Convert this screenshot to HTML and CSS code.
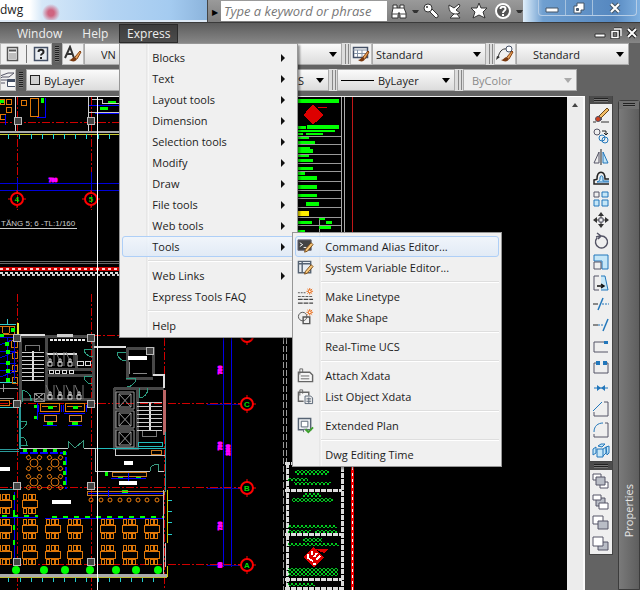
FILE: index.html
```html
<!DOCTYPE html>
<html lang="en">
<head>
    <meta charset="UTF-8">
    <meta name="viewport" content="width=device-width, initial-scale=1.0">
    <title>dwg</title>
    <link rel="stylesheet" href="styles.css">
</head>
<body>

    <!-- Title bar -->
    <header class="titlebar">
        <div class="glass"><span class="doc-name">dwg</span></div>
        <div class="infocenter">
            <button class="expand" aria-label="Show search">&#9654;</button>
            <input class="search" type="text" placeholder="Type a keyword or phrase" aria-label="Search">
            <button class="info-btn" aria-label="Find"><svg viewBox="0 0 18 18"><path d="M3 3h4v3h3V3h4v3l2 5v5h-6v-5H8v5H2v-5l1-5z" fill="#fff" stroke="#333"/><path d="M2 12h5M11 12h5M3 6h4M10 6h4" stroke="#444"/></svg></button>
            <span class="drop"></span>
            <button class="info-btn" aria-label="Subscription"><svg viewBox="0 0 18 18"><path d="M7 9l7 7 2-1v-2l-6-6" fill="#fff" stroke="#333"/><circle cx="6" cy="6" r="4" fill="#fff" stroke="#333"/><circle cx="5" cy="5" r="1" fill="#333"/></svg></button>
            <button class="info-btn" aria-label="Communication"><svg viewBox="0 0 18 18"><path d="M3 3c-1 7 4 11 11 8l-4-3 4-4-1-2-5 4zM8 12l-4 4h10l-3-4" fill="#fff" stroke="#333"/></svg></button>
            <button class="info-btn" aria-label="Favorites"><svg viewBox="0 0 18 18"><path d="M9 1l2 5h6l-4 4 2 6-6-3-6 3 2-6-4-4h6z" fill="#fff" stroke="#333"/></svg></button>
            <button class="info-btn" aria-label="Help"><svg viewBox="0 0 18 18"><circle cx="9" cy="9" r="7" fill="#555" stroke="#fff" stroke-width="2"/><path d="M6.500 7c0-3 5-3 5 0 0 2-2.500 1.500-2.500 4M9 12v2" fill="none" stroke="#fff" stroke-width="2"/></svg></button>
            <span class="drop"></span>
        </div>
        <div class="window-buttons">
            <div class="caption">
                <button aria-label="Minimize"><svg viewBox="0 0 14 14"><path d="M1 7h12v4H1z" fill="#fff" stroke="#456"/></svg></button>
                <button aria-label="Restore"><svg viewBox="0 0 14 14"><path d="M5 2h7v7H9v3H2V5h3z" fill="#fff" stroke="#456"/><path d="M4.500 7.500h2v2h-2z" fill="#568" stroke="#456"/></svg></button>
                <button class="close" aria-label="Close"><svg viewBox="0 0 14 14"><path d="M3 3l8 8M11 3l-8 8" stroke="#456" stroke-width="4"/><path d="M3 3l8 8M11 3l-8 8" stroke="#fff" stroke-width="2"/></svg></button>
            </div>
        </div>
    </header>

    <!-- Menu bar -->
    <nav class="menubar">
        <button class="menu-title">Window</button>
        <button class="menu-title">Help</button>
        <div class="menu-holder">
            <button class="menu-title open">Express</button>
            <ul class="menu">
                <li><button class="more">Blocks</button></li>
                <li><button class="more">Text</button></li>
                <li><button class="more">Layout tools</button></li>
                <li><button class="more">Dimension</button></li>
                <li><button class="more">Selection tools</button></li>
                <li><button class="more">Modify</button></li>
                <li><button class="more">Draw</button></li>
                <li><button class="more">File tools</button></li>
                <li><button class="more">Web tools</button></li>
                <li class="has-sub">
                    <button class="more active">Tools</button>
                    <ul class="menu submenu">
                        <li><button class="active"><svg viewBox="0 0 18 18"><path d="M1 2h14v11H1z" fill="#444" stroke="#667"/><path d="M3 5l3 2-3 2M7 10h3" stroke="#fff" fill="none"/><path d="M8 15l1-3 6-7 2 2-6 7z" fill="#f7c77a" stroke="#7a4b16"/></svg>Command Alias Editor...</button></li>
                        <li><button><svg viewBox="0 0 18 18"><path d="M1.500 2.500h13v12h-13zM1 5h14M5.500 3v11" fill="#e8edf2" stroke="#566373" stroke-width="1.500"/><path d="M8 16l1-3 6-7 2 2-6 7z" fill="#f7c77a" stroke="#7a4b16"/></svg>System Variable Editor...</button></li>
                        <li class="sep"></li>
                        <li><button><svg viewBox="0 0 18 18"><path d="M1 5h9" stroke="#555" stroke-dasharray="2 1"/><path d="M1 9h16" stroke="#555" stroke-dasharray="3 1"/><path d="M1 12h16M1 16h16" stroke="#444" stroke-width="1.500" stroke-dasharray="5 1"/><path d="M13.500 0v7M10 3.500h7M11 1l5 5M16 1l-5 5" stroke="#e76b18"/><circle cx="13.500" cy="3.500" r="1.500" fill="#fff" stroke="#e76b18"/></svg>Make Linetype</button></li>
                        <li><button><svg viewBox="0 0 18 18"><circle cx="6" cy="8" r="4.500" fill="#eee" stroke="#555"/><path d="M6.500 8.500h7v7h-7z" fill="none" stroke="#555" stroke-width="1.500"/><path d="M13.500 0v7M10 3.500h7M11 1l5 5M16 1l-5 5" stroke="#e76b18"/><circle cx="13.500" cy="3.500" r="1.500" fill="#fff" stroke="#e76b18"/></svg>Make Shape</button></li>
                        <li class="sep"></li>
                        <li><button>Real-Time UCS</button></li>
                        <li class="sep"></li>
                        <li><button><svg viewBox="0 0 18 18"><path d="M1.500 5.500h12l3 3v7h-15z" fill="#f6f6f6" stroke="#666" stroke-width="1.500"/><path d="M4 9.500h9M4 12.500h9M3 8V2h3v4" stroke="#666" fill="none"/></svg>Attach Xdata</button></li>
                        <li><button><svg viewBox="0 0 18 18"><path d="M7 14H1.500V4.500h11V8" fill="#f6f6f6" stroke="#666" stroke-width="1.500"/><path d="M3 8V2h3v4" stroke="#666" fill="none"/><path d="M8.500 8.500h6l2 2v6h-8z" fill="#eee" stroke="#566373"/><path d="M10 11.500h5M10 14h5M12.500 10v6" stroke="#566373"/></svg>List Object Xdata</button></li>
                        <li class="sep"></li>
                        <li><button><svg viewBox="0 0 18 18"><path d="M1.500 1.500h13v12h-13z" fill="#eef0f3" stroke="#566373" stroke-width="1.500"/><path d="M4.500 4.500h7v6h-7zM7 16v-3h4" fill="#fff" stroke="#566373"/><path d="M9 13l3 3 5-5" fill="none" stroke="#3da02c" stroke-width="2"/></svg>Extended Plan</button></li>
                        <li class="sep"></li>
                        <li><button>Dwg Editing Time</button></li>
                    </ul>
                </li>
                <li class="sep"></li>
                <li><button class="more">Web Links</button></li>
                <li><button>Express Tools FAQ</button></li>
                <li class="sep"></li>
                <li><button>Help</button></li>
            </ul>
        </div>
        <div class="doc-buttons">
            <button aria-label="Minimize drawing"><svg viewBox="0 0 12 12"><path d="M1 7h10v3H1z" fill="#fff" stroke="#333"/></svg></button>
            <button aria-label="Restore drawing"><svg viewBox="0 0 12 12"><path d="M4 2h7v7M2 4.500h6v6H2z" fill="none" stroke="#222" stroke-width="3"/><path d="M4 2h7v7M2 4.500h6v6H2z" fill="none" stroke="#fff" stroke-width="1.500"/></svg></button>
            <button aria-label="Close drawing"><svg viewBox="0 0 12 12"><path d="M2 2l8 8M10 2l-8 8" stroke="#222" stroke-width="4"/><path d="M2 2l8 8M10 2l-8 8" stroke="#fff" stroke-width="2"/></svg></button>
        </div>
    </nav>

    <!-- Toolbars -->
    <section class="toolbars">
        <div class="toolbar">
            <div class="tools first">
                <button aria-label="Calculator"><svg viewBox="0 0 18 18"><path d="M4.500 2.500h10v13h-10z" fill="#f4f4f4" stroke="#555" stroke-width="1.500"/><path d="M6 5.500h7" stroke="#555" stroke-width="2"/><path d="M6 9h7M6 11h7M6 13h7" stroke="#888"/></svg></button>
                <span class="line"></span>
                <button aria-label="Help topics"><svg viewBox="0 0 18 18"><path d="M2.500 2.500h13v13h-13z" fill="#e8ecf1" stroke="#445066" stroke-width="1.500"/><path d="M6.500 7c0-3 5-3 5 0 0 2-2.500 1.500-2.500 3.500M9 12v2" fill="none" stroke="#222" stroke-width="2"/></svg></button>
            </div>
            <span class="grip dark"></span>
            <div class="tools"><button aria-label="Text style"><svg viewBox="0 0 18 18"><path d="M1 13L6 2l4 11M3 9h6" fill="none" stroke="#333" stroke-width="2"/><path d="M11 12l5-6 1 1-4 7" fill="#e9a35a" stroke="#85400f"/><path d="M5 15c3 0 3-3 6-3l2 2c-1 3-5 3-8 1z" fill="#7a3a10"/></svg></button></div>
            <label class="combo text-style"><select aria-label="Text style"><option>VN</option></select></label>
            <span class="grip"></span>
            <div class="tools"><button aria-label="Table style"><svg viewBox="0 0 18 18"><path d="M1.500 2.500h14v10h-14z" fill="#fff" stroke="#445066" stroke-width="1.500"/><path d="M1 5h14M5.500 5v7M10 5v7M2 8.500h13" stroke="#8492a5"/><path d="M11 12l5-6 1 1-4 7" fill="#e9a35a" stroke="#85400f"/><path d="M6 15c3 0 3-3 5-3l2 2c-1 3-5 3-7 1z" fill="#7a3a10"/></svg></button></div>
            <label class="combo table-style"><select aria-label="Table style"><option>Standard</option></select></label>
            <span class="grip"></span>
            <div class="tools"><button aria-label="Leader style"><svg viewBox="0 0 18 18"><path d="M2 13C3 7 6 3 11 4" fill="none" stroke="#333"/><path d="M0 15l1-4 3 1z" fill="#333"/><circle cx="13" cy="4" r="3" fill="#fff" stroke="#445066"/><path d="M11 12l5-6 1 1-4 7" fill="#e9a35a" stroke="#85400f"/><path d="M5 15c3 0 3-3 6-3l2 2c-1 3-5 3-8 1z" fill="#7a3a10"/></svg></button></div>
            <label class="combo leader-style"><select aria-label="Leader style"><option>Standard</option></select></label>
        </div>
        <div class="toolbar">
            <div class="tools layer"><button aria-label="Layer states"><svg viewBox="0 0 18 18"><path d="M1 5l8-3h6l-5 4H3l-3 3h9M1 12h5" fill="none" stroke="#556"/><path d="M8.500 8.500h8v7h-8z" fill="#fff" stroke="#445066"/><path d="M9 10h7" stroke="#445066" stroke-width="2"/></svg></button></div>
            <span class="grip dark"></span>
            <label class="combo color"><i class="swatch"></i><select aria-label="Color"><option>ByLayer</option></select></label>
            <label class="combo linetype"><select aria-label="Linetype"><option>S</option></select></label>
            <span class="grip"></span>
            <label class="combo lineweight"><i class="stroke"></i><select aria-label="Lineweight"><option>ByLayer</option></select></label>
            <span class="grip"></span>
            <label class="combo plot"><select aria-label="Plot style" disabled><option>ByColor</option></select></label>
        </div>
    </section>

    <main class="workspace">
        <!-- Drawing area -->
        <div class="drawing">
            <svg viewBox="0 97 567 493" preserveAspectRatio="xMinYMin slice" fill="none" shape-rendering="crispEdges">
                <defs>
                    <g id="table" stroke="#e07808">
                        <path d="M0 6.500h15v7H0zM1.500 0.500h3v5h-3zM6 0.500h3v5H6zM10.500 0.500h3v5h-3zM1.500 14.500h3v5h-3zM6 14.500h3v5H6zM10.500 14.500h3v5h-3z"/>
                    </g>
                    <g id="round" stroke="#d87410" shape-rendering="auto">
                        <circle r="4"/>
                        <path d="M-8-6l3-2 2 3-3 2zM8-6l-3-2-2 3 3 2zM-8 6l3 2 2-3-3-2zM8 6L5 8 3 5l3-2z"/>
                    </g>
                    <g id="bubble" stroke="#f00" shape-rendering="auto"><circle r="6" stroke-width="2"/><path d="M-9 0h3M6 0h3M0-9v3M0 6v3"/></g>
                    <path id="column" d="M0 0h7v7H0z" fill="#444" stroke="#bbb"/>
                    <g id="wc" stroke="#ddd" shape-rendering="auto"><path d="M-2 1h4v4h-4zM-1-2h2v3h-2z"/><path d="M-4-9l3 7M4-9v14" stroke="#777"/></g>
                    <g id="lift" stroke="#999" shape-rendering="auto"><path d="M0 0h18v17H0zM3 2h12v13H3zM3 2l12 13M15 2L3 15"/></g>
                    <g id="desk"><path d="M0 0h19v8H0zM2 3h15" stroke="#e07808"/><path d="M-2 9V2M21 2v7M-1 10h21" stroke="#00f"/><path d="M8 3h5v3H8zM7 19h6v3H7z" fill="#0f0"/><path d="M4 12h12v6H4z" stroke="#d98636"/><path d="M3 22h14" stroke="#00f"/></g>
                    <pattern id="script" width="4" height="4" patternUnits="userSpaceOnUse"><path d="M0 0l4 4M4 0L0 4" stroke="#00c81e" shape-rendering="auto"/></pattern>
                </defs>

                <!-- grid axes -->
                <g stroke="#d00000" stroke-dasharray="8 2 2 2">
                    <path d="M17 97v113M91 97v113M17 294v296M91 294v296M164 338v252M0 122h119M93 335h154M0 403h241M0 487h241M0 564h241"/>
                </g>

                <!-- upper plan -->
                <g stroke="#e07808"><path d="M0 99h4v5H0zM6 99h5v5H6zM6 107h5v5H6zM0 114h5v5H0zM30 98h8v18h-8z"/><circle cx="24" cy="103" r="3"/></g>
                <path d="M45 98v19h-8M5 115v10M89 105h30M95 113h24" stroke="#00f"/>
                <path d="M41 98h3v5h-3zM0 100h4v3H0zM100 107h8v3h-8zM108 101h8v2h-8z" fill="#0f0"/>
                <path d="M15 97v34M88 97v34M92 99h10v4h17M88 112h31" stroke="#ccc"/>
                <use href="#column" x="14" y="117"/><use href="#column" x="87" y="117"/>
                <path d="M0 132h119" stroke="#aaa" stroke-width="2"/><path d="M0 134h119" stroke="#cc3"/>
                <path d="M8 134v5M19 134v5M31 134v5M42 134v5M53 134v5M64 134v5M75 134v5M86 134v5M98 134v5M109 134v5" stroke="#2dd"/>
                <path d="M0 183h119M0 190h119M17 178v12M91 172v18" stroke="#0000d8"/>
                <use href="#bubble" x="17" y="199"/><use href="#bubble" x="91" y="199"/>
                <path d="M0 228h77" stroke="#ccc"/>
                <path d="M0 261h119M0 263h119" stroke="#666"/>
                <path d="M0 269h119" stroke="#c00" stroke-width="4"/><path d="M0 269h119" stroke="#fcc" stroke-width="2" stroke-dasharray="3 3"/>
                <path d="M0 273h119" stroke="#ddd" stroke-width="2" stroke-dasharray="3 2"/><path d="M2 275h117" stroke="#ccc" stroke-width="2" stroke-dasharray="3 2"/>

                <!-- left rooms -->
                <path d="M0 324h16M7 319v5M0 382h16M0 407h14" stroke="#3cc"/><path d="M18 323v12" stroke="#ee3" stroke-width="2"/>
                <g stroke="#d87410"><circle cx="6" cy="330" r="4"/><path d="M0 326h14v8H0M11 340h6v7h-6zM12 352h5v6h-5zM12 365h5v6h-5zM12 377h5v6h-5zM0 400h9v5H0"/></g>
                <path d="M0 337h18M0 345l12-5M0 351h16M0 358l14-6M0 363h16M0 370h16M0 377l14-5M14 338v42M7 337v44" stroke="#00d"/>
                <path d="M11 328h4v4h-4zM0 334h4v3H0zM5 342h4v4H5zM6 350h4v4H6zM6 361h4v4H6zM6 369h4v4H6zM6 378h4v4H6z" fill="#0f0"/>
                <path d="M0 388h18M0 398h14M3 384v8" stroke="#999"/>

                <!-- core walls -->
                <g stroke="#484848" stroke-width="3"><path d="M20 337v67M46 336v64M46 369h47M46 375h47M21 336h72M93 338v64M22 399h71M76 355v14M127 348h26v28M127 348v30h26M114 388h50M114 388v60h23V388"/></g>
                <path d="M20 335h25M94 347h32M153 375h11v13M47 354h30" stroke="#ddd" stroke-width="2"/>
                <path d="M50 340h35" stroke="#eee" stroke-width="2" stroke-dasharray="3 1"/><path d="M57 334h16v3H57z" fill="#ccc"/>
                <path d="M22 352h22M22 356h22M22 360h22M22 364h22M22 368h22M22 372h22M22 376h22M22 380h22" stroke="#ccc"/>
                <path d="M33 351v30M150 402v29" stroke="#ddd" stroke-width="2"/><path d="M25 351v-6h14v6M142 431v5h14v-5" stroke="#777"/>
                <path d="M137 402h25M137 406h25M137 410h25M137 414h25M137 418h25M137 422h25M137 426h25M137 430h25" stroke="#ccc"/>
                <path d="M164 390v45" stroke="#b66" stroke-width="3"/>
                <use href="#wc" x="50" y="361"/><use href="#wc" x="60" y="361"/><use href="#wc" x="70" y="361"/>
                <use href="#wc" x="50" y="394"/><use href="#wc" x="60" y="394"/><use href="#wc" x="70" y="394"/><use href="#wc" x="79" y="394"/>
                <path d="M77 361h6v4h-6zM85 361h5v4h-5zM49 370h4v3h-4zM55 370h4v3h-4zM62 370h4v3h-4zM69 370h4v3h-4z" stroke="#ddd"/>
                <path d="M34 393h10v8H34zM34 393l10 8M44 393l-10 8M129 362v12M133 373h14" stroke="#888"/>
                <use href="#column" x="13" y="334"/><use href="#column" x="87" y="334"/><use href="#column" x="13" y="400"/><use href="#column" x="87" y="400"/><use href="#column" x="146" y="347"/>
                <path d="M22 402v-12c6 1 10 6 9 11M92 349h-8c0 4 4 8 9 8M92 376h-8c0 4 3 8 8 8M126 352h-9c0 5 4 9 9 9M126 378h10c0 5-5 9-9 9M139 388v10c5 0 9-4 9-10M20 421h7c0 4-4 8-7 8M20 445h7c0-5-3-8-7-8" stroke="#2c9c80"/>
                <path d="M19 407v42M20 407v42M0 489h13M165 432v60M0 449h19M0 451h19" stroke="#2a9a9a"/>
                <use href="#lift" x="116" y="392"/><use href="#lift" x="116" y="411"/><use href="#lift" x="116" y="430"/>
                <use href="#desk" x="40" y="403"/><use href="#desk" x="65" y="403"/>
                <path d="M34 405h3v3h-3zM34 416h3v3h-3z" fill="#0f0"/><path d="M37 403v17" stroke="#00f"/>

                <!-- dining hall -->
                <path d="M20 448h48M84 448h11v23h55M115 448v7h50M158 471h6" stroke="#ccc"/><path d="M96 448h69M138 442h24v4h-24z" stroke="#2bb"/>
                <path d="M68 448v-7l7 7 8-7v7M150 471c0-5 4-7 8-7v7" stroke="#3a9a80"/>
                <path d="M20 453h46v36" stroke="#00f" stroke-width="2" stroke-dasharray="8 2"/>
                <path d="M23 449h4v3h-4zM33 449h4v3h-4zM43 449h4v3h-4zM53 449h4v3h-4zM63 451h3v4h-3zM63 461h3v4h-3zM63 471h3v4h-3zM63 481h3v4h-3zM105 472h3v4h-3zM118 476h5v3h-5zM136 476h5v3h-5zM122 490h6v4h-6z" fill="#0f0"/>
                <use href="#round" x="34" y="463"/><use href="#round" x="55" y="463"/><use href="#round" x="34" y="482"/><use href="#round" x="55" y="482"/>
                <path d="M112 472h34v4h-34zM87 491h77v4M87 491v4h77M151 450h10v4h-10z" stroke="#c87820"/><path d="M111 478h35M88 493h75M108 490v7M128 473v8" stroke="#00f"/>
                <g stroke="#f08010" shape-rendering="auto"><circle cx="91" cy="500" r="2"/><circle cx="101" cy="500" r="2"/><circle cx="110" cy="500" r="2"/><circle cx="120" cy="500" r="2"/><circle cx="129" cy="500" r="2"/><circle cx="138" cy="500" r="2"/><circle cx="147" cy="500" r="2"/><circle cx="157" cy="500" r="2"/></g>
                <path d="M0 467h10v4H0zM52 500h19v4H52zM124 461h9v4h-9zM119 481h18v4h-18zM128 356h19v4h-19z" fill="#fff"/>
                <path d="M45 518h118M0 517h38M14 492v66" stroke="#00f"/>
                <path d="M2 516h36" stroke="#0f0" stroke-width="2" stroke-dasharray="5 6"/><path d="M52 517h112" stroke="#0f0" stroke-width="2" stroke-dasharray="5 6"/><path d="M14 495v60" stroke="#0f0" stroke-width="2" stroke-dasharray="5 10"/>
                <use href="#table" x="-4" y="494"/><use href="#table" x="22" y="494"/>
                <use href="#table" x="-4" y="519"/><use href="#table" x="22" y="519"/><use href="#table" x="45" y="519"/><use href="#table" x="67" y="519"/><use href="#table" x="100" y="519"/><use href="#table" x="122" y="519"/><use href="#table" x="144" y="519"/>
                <use href="#table" x="-4" y="545"/><use href="#table" x="22" y="545"/><use href="#table" x="45" y="545"/><use href="#table" x="67" y="545"/><use href="#table" x="100" y="545"/><use href="#table" x="122" y="545"/><use href="#table" x="144" y="545"/>
                <use href="#column" x="13" y="482"/><use href="#column" x="87" y="482"/><use href="#column" x="13" y="558"/><use href="#column" x="87" y="558"/>
                <path d="M167 490v53M167 566v11" stroke="#cc0"/><path d="M163 490v86M165 543v24" stroke="#bbb"/>
                <path d="M168 500h4M168 511h4M168 522h4M168 534h4M8 577v5M20 577v5M31 577v5M42 577v5M53 577v5M64 577v5M75 577v5M86 577v5M98 577v5M109 577v5M120 577v5M131 577v5M142 577v5M153 577v5" stroke="#2cc"/>
                <path d="M0 575h167" stroke="#aaa" stroke-width="3"/><path d="M0 577h167" stroke="#bb3"/>
                <g fill="#0f0" shape-rendering="auto"><circle cx="16" cy="570" r="4"/><circle cx="44" cy="570" r="4"/><circle cx="65" cy="570" r="4"/><circle cx="90" cy="570" r="4"/><circle cx="116" cy="570" r="4"/><circle cx="136" cy="570" r="4"/><circle cx="158" cy="570" r="4"/></g>
                <path d="M97 97v493" stroke="#fff"/>

                <!-- dimension lines -->
                <path d="M223 338v229M231 338v229" stroke="#0000e8"/><path d="M207 404h33M207 488h33M207 565h33" stroke="#00a"/>
                <use href="#bubble" x="247" y="336"/><use href="#bubble" x="247" y="404"/><use href="#bubble" x="247" y="488"/><use href="#bubble" x="247" y="565"/>

                <!-- sheet frame and title block -->
                <path d="M283 338v252M286 338v252" stroke="#999" stroke-dasharray="6 2"/>
                <path d="M341 97v137M344 97v137" stroke="#aaa"/><path d="M352 97v137" stroke="#c01818"/>
                <path d="M297 136h44M297 144h44M297 154h44M297 163h44M297 171h44M297 181h44M297 190h44M297 198h44M297 207h44M297 217h44M319 217v17M297 225h44" stroke="#999"/>
                <path d="M297 99h42v4h-42zM297 126h9v3h-9zM307 125h32v4h-32zM297 130h38v2h-38zM297 133h6v2h-6zM306 133h17v2h-17zM297 137h12v2h-12zM297 141h18v3h-18zM297 147h13v2h-13zM297 149h16v4h-16zM297 155h12v2h-12zM297 159h16v3h-16zM297 167h16v3h-16zM297 172h8v3h-8zM297 176h20v4h-20zM297 185h20v4h-20zM297 194h20v3h-20zM306 202h13v4h-13zM297 221h15v3h-15zM297 230h8v3h-8zM319 218h6v2h-6zM326 221h6v3h-6zM319 226h12v3h-12z" fill="#0f0"/>
                <path d="M297 211h12v5h-12z" fill="#fe0"/>
                <path d="M313 105l10 10-10 9-9-9zM318 107h9" fill="#d00" stroke="#d00"/>
                <path d="M287 463v127M342 467v123M285 463h57M285 490h57M285 534h57M285 579h57M285 588h57" stroke="#ddd" stroke-width="3" stroke-dasharray="5 1"/>
                <path d="M295 470h34v5h-34zM288 478h20v3h-20zM294 482h37v3h-37zM303 493h18v4h-18zM292 498h41v4h-41zM288 525h49v3h-49zM288 530h23v3h-23zM315 530h22v3h-22zM303 538h19v4h-19zM288 543h51v3h-51zM288 568h50v8h-50zM288 583h27v3h-27z" fill="url(#script)"/>
                <path d="M313 547l11 10-10 10-11-10zM314 549h14l-4 4" fill="#d00"/><path d="M308 554v5M312 551v4M317 553l-3 4M320 556l-4 4M309 559l4 2M313 564h3" stroke="#fff" stroke-width="2"/>
                <path d="M352 467v123" stroke="#e00" stroke-width="3"/><path d="M352 467v123" stroke="#fff" stroke-dasharray="3 3"/>

                <!-- labels -->
                <g class="axis-label"><text x="17" y="202">4</text><text x="91" y="202">5</text><text x="247" y="407">C</text><text x="247" y="491">B</text><text x="247" y="568">A</text></g>
                <text class="plan-title" x="1" y="226">TĂNG 5; 6 -TL:1/160</text>
                <g class="dim-label"><text x="53" y="182">780</text><text transform="translate(222 370) rotate(-90)">780</text><text transform="translate(222 446) rotate(-90)">780</text><text transform="translate(230 450) rotate(-90)">2300</text><text transform="translate(222 526) rotate(-90)">720</text><text transform="translate(222 565) rotate(-90)">80</text></g>
            </svg>
        </div>
        <div class="scrollbar"><button aria-label="Scroll up"></button></div>

        <div class="dock">
            <!-- Modify toolbar -->
            <div class="palette">
                <span class="handle"></span>
                <button aria-label="Erase"><svg viewBox="0 0 16 16"><path d="M6 9l8-8 2 2-8 8z" fill="#f3bc63" stroke="#6b4a1c"/><path d="M5 9l4 3-2 2-4-2z" fill="#333"/><circle cx="5" cy="12" r="2.500" fill="#d2401c"/><path d="M0 15h3M8 15h8" stroke="#333"/></svg></button>
                <button aria-label="Copy"><svg viewBox="0 0 16 16"><circle cx="4" cy="4" r="3"/><path d="M9 3h4v4M11 5l2 2 2-2" stroke="#222"/><circle class="b" cx="9" cy="10" r="3"/><circle class="b" cx="12" cy="12" r="3"/></svg></button>
                <button aria-label="Mirror"><svg viewBox="0 0 16 16"><path d="M6 3v11H1z"/><path class="b f" d="M10 3v11h5z"/><path d="M8 0v16" stroke="#222"/></svg></button>
                <button aria-label="Offset"><svg viewBox="0 0 16 16"><path d="M16 14H1v-4c2-1 3 0 3-1 0-9 8-9 8 0h4" stroke="#222" stroke-width="1.500"/><path class="b f" d="M16 12H4c2-1 3-1 3-4 0-3 3-3 3 0v3h6"/></svg></button>
                <button aria-label="Array"><svg viewBox="0 0 16 16"><path d="M1 1h5v5H1z"/><path class="b f" d="M9 1h6v5H9zM1 9h5v6H1zM9 9h6v6H9z"/></svg></button>
                <button aria-label="Move"><svg viewBox="0 0 16 16"><path d="M6 6h4v4H6z"/><path d="M8 0l3 4H5zM8 16l3-4H5zM0 8l4-3v6zM16 8l-4-3v6z" fill="#333" stroke="none"/><path d="M8 3v3M8 10v3M3 8h3M10 8h3" stroke="#333"/></svg></button>
                <button aria-label="Rotate"><svg viewBox="0 0 16 16"><path d="M8 3a6 6 0 1 1-4 2M3 4l4-1M4 0l4 3-3 3" stroke-width="1.500"/></svg></button>
                <button aria-label="Scale"><svg viewBox="0 0 16 16"><path class="b f" d="M1 1h14v14H9V7H1z"/><path d="M1 8h7v7H1z"/></svg></button>
                <button aria-label="Stretch"><svg viewBox="0 0 16 16"><path class="b f" d="M8 1h4l3 14H8"/><path d="M6 1H1v14h5"/><path d="M4 11h6M8 9l3 2-3 2" stroke="#111" stroke-width="1.500"/></svg></button>
                <button aria-label="Trim"><svg viewBox="0 0 16 16"><path d="M0 8h5" stroke="#222"/><path class="b" d="M5 14l5-12" stroke-width="1.500"/><path class="b" d="M9 8h7" stroke-dasharray="2 1"/></svg></button>
                <button aria-label="Extend"><svg viewBox="0 0 16 16"><path d="M0 8h5" stroke="#222"/><path class="b" d="M5 8h6" stroke-dasharray="2 1"/><path class="b" d="M10 14l5-12" stroke-width="1.500"/></svg></button>
                <button aria-label="Break at point"><svg viewBox="0 0 16 16"><path d="M12 4H1v10h14"/><path d="M11 3h4v3h-4z" fill="#27b" stroke="none"/></svg></button>
                <button aria-label="Break"><svg viewBox="0 0 16 16"><path d="M4 4H1v10h14V4h-3"/><path d="M3 2h4v4H3zM10 2h4v4h-4z" fill="#27b" stroke="none"/></svg></button>
                <button aria-label="Join"><svg viewBox="0 0 16 16"><path class="b" d="M1 8h14"/><path d="M4 5l4 3-4 3zM12 5L8 8l4 3z" fill="#27b" stroke="none"/></svg></button>
                <button aria-label="Chamfer"><svg viewBox="0 0 16 16"><path d="M1 11v4h14V1h-4"/><path class="b" d="M0 10l9-9"/></svg></button>
                <button aria-label="Fillet"><svg viewBox="0 0 16 16"><path d="M1 12v3h14V1h-3"/><path class="b" d="M1 10c0-6 4-9 9-9"/></svg></button>
                <button aria-label="Explode"><svg viewBox="0 0 16 16"><path class="b f" d="M4 6h6v8H4zM10 6l3-2v6l-3 3M0 6l3-2v6l-3 2zM5 3l3-2h4L9 4zM13 4l3-1v7l-2 2z"/></svg></button>
            </div>
            <!-- Draw order toolbar -->
            <div class="palette">
                <span class="handle"></span>
                <button aria-label="Bring to front"><svg viewBox="0 0 16 16"><path class="w" d="M0 1h8v6H0zM7 9h8v6H7z"/><path class="g" d="M3 4h9v8H3z"/></svg></button>
                <button aria-label="Send to back"><svg viewBox="0 0 16 16"><path class="g" d="M3 4h9v8H3z"/><path class="w" d="M0 1h8v5H0zM6 9h9v6H6z"/></svg></button>
                <button aria-label="Bring above objects"><svg viewBox="0 0 16 16"><path class="w" d="M0 1h10v8H0z"/><path class="g" d="M5 6h10v8H5z"/></svg></button>
                <button aria-label="Send under objects"><svg viewBox="0 0 16 16"><path class="g" d="M5 6h10v8H5z"/><path class="w" d="M0 1h10v9H0z"/></svg></button>
            </div>
        </div>

        <aside class="properties">
            <span class="handle"></span>
            <span class="properties-title">Properties</span>
        </aside>
    </main>

</body>
</html>
```
FILE: styles.css
```css
* {
    box-sizing: border-box;
}

body {
    margin: 0;
    height: 100vh;
    display: flex;
    flex-direction: column;
    overflow: hidden;
    background-color: #636363;
    font-family: "Open Sans", "Noto Sans", sans-serif;
    font-size: 11px;
    color: #1c1c1c;
}

button, select, input {
    font: inherit;
    color: inherit;
    margin: 0;
    padding: 0;
    border: none;
    background: none;
}

svg {
    display: block;
}

/* Title bar */
.titlebar {
    display: flex;
    height: 22px;
    flex-shrink: 0;
}

.glass {
    width: 207px;
    background: radial-gradient(circle at 51px 13px, #cf6480 3px, rgba(208, 96, 124, 0) 9px),
        linear-gradient(90deg, #fff 30px, #d6e8f8 42px, #b4d4f3 110px, #a4cbf0 170px, #8cb4dc);
    border-bottom: 2px solid #dde9f5;
}

.doc-name {
    display: block;
    line-height: 20px;
    font-size: 12px;
}

.infocenter {
    flex: 1;
    display: flex;
    align-items: center;
    background: linear-gradient(#9a9a9a, #7e7e7e);
}

.expand {
    width: 14px;
    height: 22px;
    font-size: 8px;
    color: #000;
    border-left: 1px solid #444;
}

.search {
    flex: 1;
    min-width: 0;
    height: 20px;
    padding-left: 3px;
    background: #fff;
    font-size: 13px;
    font-style: italic;
}

.search::placeholder {
    color: #777;
}

.info-btn {
    width: 24px;
    padding-left: 3px;
}

.info-btn svg {
    width: 18px;
    height: 18px;
}

.drop {
    width: 7px;
    border: 2px solid transparent;
    border-top: 3px solid #333;
    margin: 3px 0 0 1px;
}

.window-buttons {
    width: 117px;
    padding-left: 15px;
    background: linear-gradient(90deg, #e0effb, #6f9fd0 20px, #5688c0 90px, #7fb0e0);
}

.caption {
    display: flex;
    width: 99px;
    height: 16px;
    border: 1px solid #b6cde6;
    border-top: none;
    border-radius: 0 0 4px 4px;
}

.caption button {
    width: 27px;
    display: flex;
    justify-content: center;
    align-items: center;
    border-right: 1px solid #a6c2de;
}

.caption .close {
    flex: 1;
    border-right: none;
}

.caption svg {
    width: 14px;
    height: 14px;
}

/* Menu bar */
.menubar {
    display: flex;
    align-items: flex-end;
    height: 21px;
    flex-shrink: 0;
    padding-left: 7px;
    background: linear-gradient(#5c5c5c, #868686);
    border-top: 1px solid #3a3a3a;
}

.menu-title {
    height: 19px;
    padding: 0 10px;
    font-size: 12px;
    color: #eee;
}

.menu-holder {
    position: relative;
    margin-left: 1px;
}

.menu-title.open {
    width: 59px;
    background: linear-gradient(#3c3c3c, #4c4c4c);
    border: 1px solid #2a2a2a;
    padding: 0;
}

.doc-buttons {
    display: flex;
    margin-left: auto;
    gap: 4px;
    padding: 0 2px 4px 0;
}

.doc-buttons svg {
    width: 12px;
    height: 12px;
}

/* Menus */
.menu {
    position: absolute;
    z-index: 2;
    left: 0;
    top: 19px;
    width: 179px;
    margin: 0;
    padding: 3px 2px 1px;
    list-style: none;
    background: linear-gradient(90deg, #f0f0f0 26px, #dcdcdc 27px, #fff 28px, #f0f0f0 29px);
    border: 1px solid #979797;
    box-shadow: 2px 2px 2px rgba(0, 0, 0, 0.4);
}

.menu button {
    position: relative;
    display: block;
    width: 100%;
    height: 21px;
    padding-left: 29px;
    border: 1px solid transparent;
    border-radius: 3px;
    text-align: left;
    white-space: nowrap;
}

.menu button.active {
    border-color: #aecff7;
    background: linear-gradient(rgba(240, 246, 253, 0.8), rgba(222, 233, 247, 0.8));
}

.more::after {
    content: "";
    position: absolute;
    right: 9px;
    top: 6px;
    border: 4px solid transparent;
    border-left: 4px solid #111;
    border-right: none;
}

.menu svg {
    position: absolute;
    left: 1px;
    top: 1px;
    width: 17px;
    height: 17px;
}

.sep {
    height: 8px;
    margin-left: 26px;
    background: linear-gradient(transparent 3px, #dedede 3px, #dedede 4px, #fff 4px, #fff 5px, transparent 5px);
}

.has-sub {
    position: relative;
}

.submenu {
    left: 170px;
    top: -4px;
    width: 210px;
}

/* Toolbars */
.toolbars {
    display: flex;
    flex-direction: column;
    gap: 4px;
    padding-bottom: 5px;
}

.toolbar {
    display: flex;
    height: 22px;
}

.tools {
    display: flex;
    align-items: center;
    justify-content: center;
    width: 22px;
    background: #f0f0f0;
    border: 1px solid #bbb;
}

.tools svg {
    width: 18px;
    height: 18px;
}

.tools.first {
    width: 52px;
    gap: 5px;
}

.tools.layer {
    width: 16px;
    overflow: hidden;
}

.line {
    width: 1px;
    height: 18px;
    background: #777;
}

.grip {
    width: 8px;
    background: repeating-linear-gradient(90deg, #ddd 0, #ddd 2px, #888 2px, #888 3px);
    border: 1px solid #ddd;
}

.grip.dark {
    width: 10px;
    border: 3px solid #606060;
    background: repeating-linear-gradient(#222 0, #222 1px, #777 1px, #777 2px);
}

.combo {
    position: relative;
    display: flex;
    align-items: center;
    gap: 4px;
    padding-left: 3px;
    background: linear-gradient(#fafafa, #dcdcdc);
    border: 1px solid #aaa;
}

.combo select {
    appearance: none;
    flex: 1;
    min-width: 0;
    opacity: 1;
}

.combo::after {
    content: "";
    margin-right: 4px;
    border: 4px solid transparent;
    border-top: 5px solid #000;
    border-bottom: none;
}

.text-style {
    width: 258px;
    padding-left: 16px;
}

.table-style {
    width: 114px;
}

.leader-style {
    width: 113px;
    padding-left: 16px;
}

.color {
    width: 190px;
}

.linetype {
    width: 113px;
    padding-left: 81px;
}

.lineweight {
    width: 118px;
}

.plot {
    width: 114px;
    padding-left: 8px;
    background: #efefef;
}

.plot select {
    color: #8a8a8a;
}

.plot::after {
    border-top-color: #aaa;
}

.swatch {
    width: 10px;
    height: 10px;
    background: #d0d0d0;
    border: 1px solid #222;
}

.stroke {
    width: 33px;
    height: 1px;
    background: #000;
}

/* Workspace */
.workspace {
    flex: 1;
    min-height: 0;
    display: flex;
}

.drawing {
    flex: 1;
    min-width: 0;
    overflow: hidden;
    background: #000;
    border-top: 1px solid #eee;
}

.drawing svg {
    width: 100%;
    height: 100%;
}

.drawing text {
    font-family: "Liberation Sans", Arial, sans-serif;
}

.axis-label {
    fill: #0d0;
    font-size: 8px;
    font-weight: bold;
    text-anchor: middle;
}

.plan-title {
    fill: #ccc;
    font-size: 8px;
}

.dim-label {
    fill: #f0f;
    stroke: #f0f;
    font-size: 5px;
    font-weight: bold;
    text-anchor: middle;
}

.scrollbar {
    width: 18px;
    background: #ececec;
    border-top: 1px solid #fff;
    border-right: 2px solid #fafafa;
}

.scrollbar button {
    display: block;
    margin: 6px auto;
    border: 3px solid transparent;
    border-bottom: 4px solid #444;
    border-top: none;
}

.dock {
    width: 33px;
    padding: 0 5px 0 4px;
}

.palette {
    background: #efefef;
    border: 1px solid #444;
    border-top: none;
}

.handle {
    display: block;
    height: 8px;
    border: 2px solid #4c4c4c;
    background: repeating-linear-gradient(#222 0, #222 1px, #777 1px, #777 2px);
    border-left-width: 4px;
    border-right-width: 4px;
}

.palette button {
    display: flex;
    align-items: center;
    justify-content: center;
    width: 100%;
    height: 21px;
}

.palette svg {
    width: 16px;
    height: 16px;
    fill: none;
    stroke: #556;
    overflow: visible;
}

.palette .b {
    stroke: #2277bb;
}

.palette .f {
    fill: #c5e6f7;
}

.palette .w {
    fill: #fff;
}

.palette .g {
    fill: #b9bdc6;
}

.properties {
    display: flex;
    flex-direction: column;
    justify-content: space-between;
    width: 22px;
    padding-bottom: 52px;
    background: linear-gradient(90deg, #7a7a7a, #5e5e5e);
    border: 1px solid #3c3c3c;
    border-radius: 3px 3px 0 0;
    margin-top: 4px;
}

.properties .handle {
    border-color: #707070;
}

.properties-title {
    writing-mode: vertical-rl;
    transform: rotate(180deg);
    line-height: 20px;
    color: #e6e6e6;
}
```
